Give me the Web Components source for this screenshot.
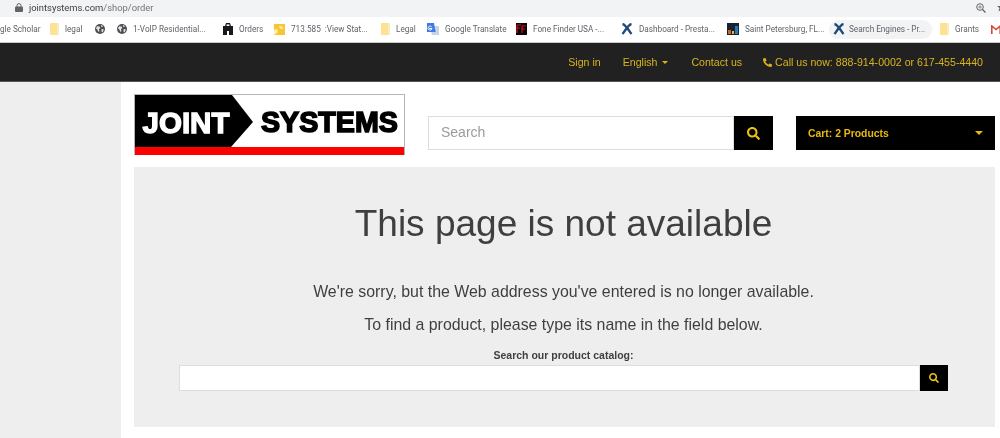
<!DOCTYPE html>
<html>
<head>
<meta charset="utf-8">
<title>Joint Systems</title>
<style>
    html, body { margin: 0; padding: 0; background: #fff; }
    body { width: 1000px; height: 438px; overflow: hidden; font-family: "Liberation Sans", Arial, sans-serif; filter: blur(.35px); }
</style>
</head>
<body>
<browser-bar></browser-bar>
<bookmark-bar>
    <book-mark style="width:37px;margin-left:0">gle Scholar</book-mark>
    <book-mark icon="folder" style="margin-left:13px;width:32px">legal</book-mark>
    <book-mark icon="globe" style="margin-left:13px;width:10px"></book-mark>
    <book-mark icon="globe" style="margin-left:12px;width:87px">1-VoIP Residential...</book-mark>
    <book-mark icon="orders" style="margin-left:19px;width:40px">Orders</book-mark>
    <book-mark icon="star" style="margin-left:11px;width:91px">713.585 &nbsp;:View Stat...</book-mark>
    <book-mark icon="folder" style="margin-left:16px;width:34px">Legal</book-mark>
    <book-mark icon="translate" style="margin-left:12px;width:78px">Google Translate</book-mark>
    <book-mark icon="fone" style="margin-left:11px;width:88px">Fone Finder USA -...</book-mark>
    <book-mark icon="x" style="margin-left:17px;width:93px">Dashboard - Presta...</book-mark>
    <book-mark icon="map" style="margin-left:13px;width:94px">Saint Petersburg, FL...</book-mark>
    <book-mark icon="x" active style="margin-left:8px;width:103px">Search Engines - Pr...</book-mark>
    <book-mark icon="folder" style="margin-left:8px;width:39px">Grants</book-mark>
    <book-mark icon="gmail" style="margin-left:12px;width:9px"></book-mark>
</bookmark-bar>
<top-nav></top-nav>
<page-body>
    <site-header></site-header>
    <not-available></not-available>
</page-body>

<script>
const SEARCH_PATH = 'M505 442.7L405.3 343c-4.5-4.5-10.6-7-17-7H372c27.6-35.3 44-79.7 44-128C416 93.1 322.9 0 208 0S0 93.1 0 208s93.1 208 208 208c48.3 0 92.7-16.4 128-44v16.3c0 6.4 2.5 12.5 7 17l99.7 99.7c9.4 9.4 24.6 9.4 33.9 0l28.3-28.3c9.4-9.4 9.4-24.6.1-34zM208 336c-70.7 0-128-57.2-128-128 0-70.7 57.2-128 128-128 70.7 0 128 57.2 128 128 0 70.7-57.2 128-128 128z';
const PHONE_PATH = 'M493.4 24.6l-104-24c-11.3-2.6-22.9 3.3-27.5 13.9l-48 112c-4.2 9.8-1.4 21.3 6.9 28l60.6 49.6c-36 76.7-98.9 140.5-177.2 177.2l-49.6-60.6c-6.8-8.3-18.2-11.1-28-6.9l-112 48C3.9 366.5-2 378.1.6 389.4l24 104C27.1 504.2 36.7 512 48 512c256.1 0 464-207.5 464-464 0-11.2-7.7-20.9-18.6-23.4z';

const ICONS = {
    folder: '<svg width="9" height="12" viewBox="0 0 9 12"><rect width="9" height="12" rx="1" fill="#fde293"/><rect x="7" width="2" height="12" fill="#f8ebc0"/></svg>',
    globe: '<svg width="10" height="10" viewBox="0 0 10 10"><circle cx="5" cy="5" r="5" fill="#4d4f53"/><path d="M2 2.2l2.4.3.9 1.5-1.4 1.2.6 2-1.2.6L2.4 5.4 1 4.4zM6.2 1l1.7.9-.7 1.2-1.2-.4zM6.7 5l2 .3-.6 2.2-1.2 1-.4-1.6z" fill="#e6e7e8"/></svg>',
    orders: '<svg width="10" height="12" viewBox="0 0 10 12"><path d="M2 3l1-3h4l1 3h2v9H6V8H4v4H0V3z" fill="#17191c"/><rect x="3.6" y="1.4" width="2.8" height="1.6" fill="#fff"/></svg>',
    star: '<svg width="11" height="11" viewBox="0 0 11 11"><rect width="11" height="11" fill="#fbc531"/><path d="M0 11V6l3-1 1 3zM6 1l1 2 2-1-1 2 2 1H7L5 3z" fill="#fdf0b8"/></svg>',
    translate: '<svg width="12" height="12" viewBox="0 0 12 12"><path d="M3 3h9v9H5z" fill="#c9d3e6"/><path d="M0 0h7l1.6 9H0z" fill="#3f7be4"/><path d="M2 5.5h3M4.600 3.800A2 2 0 1 0 5 5.500" stroke="#fff" stroke-width=".9" fill="none"/></svg>',
    fone: '<svg width="11" height="12" viewBox="0 0 11 12"><rect width="11" height="12" fill="#0b0507"/><path d="M1 2h4M1 2v8M1 5h3M6 3h4M6 3v7M6 6h3" stroke="#d3121d" stroke-width="1.200" fill="none"/></svg>',
    x: '<svg width="12" height="12" viewBox="0 0 12 12"><path d="M1.500 1c3 .5 6 6 9 10M10.500 1c-3 .5-6 6-9 10" stroke="#1d4a78" stroke-width="2.400" fill="none"/></svg>',
    map: '<svg width="12" height="12" viewBox="0 0 12 12"><rect width="12" height="12" fill="#182230"/><rect x="1" y="7" width="3" height="4" fill="#d3641f"/><rect x="5" y="8" width="2" height="3" fill="#e8b23a"/><rect x="8" y="3" width="3" height="8" fill="#2b78b8"/></svg>',
    gmail: '<svg width="10" height="9" viewBox="0 0 10 9"><path d="M.8 9V1l4.200 3.500L9.200 1v8" stroke="#d5473a" stroke-width="1.600" fill="none"/></svg>'
};

// address bar on top of the screenshot
class BrowserBar extends HTMLElement {
    constructor() {
        super();
        this.attachShadow({ mode: 'open' });
        this.shadowRoot.innerHTML = `
        <style>
            :host {
                display: flex;
                align-items: center;
                height: 17px;
                background: #f1f3f4;
                font: 9.400px Roboto, sans-serif;
                color: #70757a;
                padding: 0 0 2px 15px;
                box-sizing: border-box;
            }
            svg { display: block; }
            .url { margin-left: 6px; flex: 1; }
            b { font-weight: 400; color: #3c4043; }
            .zoom { margin-right: 11px; }
            .star { margin-right: -6px; }
        </style>
        <svg width="8" height="9" viewBox="0 0 8 9"><path d="M2 4V2.600a2 2 0 0 1 4 0V4" stroke="#5f6368" fill="none"/><rect y="3.500" width="8" height="5.500" rx="1" fill="#5f6368"/></svg>
        <span class="url"><b>jointsystems.com</b>/shop/order</span>
        <svg class="zoom" width="10" height="10" viewBox="0 0 10 10"><circle cx="4" cy="4" r="3.300" stroke="#5f6368" fill="none"/><path d="M6.500 6.500L9.500 9.500" stroke="#5f6368" stroke-width="1.300"/><path d="M2.300 4h3.400M4 2.300v3.400" stroke="#5f6368" stroke-width=".7"/></svg>
        <svg class="star" width="9" height="9" viewBox="0 0 9 9"><path d="M4.500 0l1.300 3H9L6.500 5l1 3.500-3-2-3 2 1-3.500L0 3h3.200z" fill="#5f6368"/></svg>
        `;
    }
}
customElements.define('browser-bar', BrowserBar);

class BookmarkBar extends HTMLElement {
    constructor() {
        super();
        this.attachShadow({ mode: 'open' });
        this.shadowRoot.innerHTML = `
        <style>
            :host {
                display: flex;
                align-items: center;
                height: 25px;
                background: #fff;
                overflow: hidden;
                white-space: nowrap;
                box-sizing: border-box;
                padding-bottom: 1px;
            }
        </style>
        <slot></slot>
        `;
    }
}
customElements.define('bookmark-bar', BookmarkBar);

class BookMark extends HTMLElement {
    constructor() {
        super();
        this.attachShadow({ mode: 'open' });
    }

    connectedCallback() {
        const active = this.hasAttribute('active');
        const icon = ICONS[this.getAttribute('icon')] || '';
        this.shadowRoot.innerHTML = `
        <style>
            :host {
                display: flex;
                flex: none;
                align-items: center;
                gap: 6px;
                height: 19px;
                box-sizing: border-box;
                font: 8.200px Roboto, sans-serif;
                color: #5f6368;
                ${active ? 'background:#f1f3f4;border-radius:10px;padding-left:4px;gap:4px;' : ''}
            }
            svg { display: block; flex: none; }
        </style>
        ${icon}<slot></slot>
        `;
    }
}
customElements.define('book-mark', BookMark);

class TopNav extends HTMLElement {
    constructor() {
        super();
        this.attachShadow({ mode: 'open' });
        this.shadowRoot.innerHTML = `
        <style>
            :host {
                display: flex;
                justify-content: flex-end;
                align-items: center;
                height: 40px;
                background: #212121;
                border-top: 1px solid #c9c9c9;
                border-bottom: 1px solid #555;
                box-sizing: border-box;
                padding-right: 17px;
                color: #d8b420;
                font-size: 10.600px;
            }
            span { display: flex; align-items: center; }
            .lang { margin-left: 22px; }
            .caret {
                width: 0; height: 0;
                margin-left: 5px;
                border: 3px solid transparent;
                border-top: 3.500px solid #d8b420;
                border-bottom: 0;
            }
            .contact { margin-left: 23px; }
            .call { margin-left: 21px; }
            svg { display: block; margin-right: 3px; fill: #d8b420; }
        </style>
        <span>Sign in</span>
        <span class="lang">English<i class="caret"></i></span>
        <span class="contact">Contact us</span>
        <span class="call"><svg width="9" height="9" viewBox="0 0 512 512"><path transform="matrix(-1 0 0 1 512 0)" d="${PHONE_PATH}"/></svg>Call us now: 888-914-0002 or 617-455-4440</span>
        `;
    }
}
customElements.define('top-nav', TopNav);

class PageBody extends HTMLElement {
    constructor() {
        super();
        this.attachShadow({ mode: 'open' });
        this.shadowRoot.innerHTML = `
        <style>
            :host {
                display: grid;
                grid-template-columns: 121px 1fr;
                height: 356px;
                background: #fff;
            }
            .side { background: #eee; }
            .main { padding: 12px 5px 0 13px; }
        </style>
        <div class="side"></div>
        <div class="main"><slot></slot></div>
        `;
    }
}
customElements.define('page-body', PageBody);

class SiteHeader extends HTMLElement {
    constructor() {
        super();
        this.attachShadow({ mode: 'open' });
        this.shadowRoot.innerHTML = `
        <style>
            :host {
                display: flex;
                height: 61px;
                margin-bottom: 12px;
                align-items: flex-start;
            }
            .logo {
                width: 271px;
                height: 61px;
                flex: none;
                box-sizing: border-box;
                border: 1px solid #b5b5b5;
                border-bottom: 0;
                font-family: "Liberation Sans", sans-serif;
                font-weight: 700;
            }
            .logo svg { display: block; }
            .search { display: flex; margin: 22px 0 0 23px; }
            .input {
                width: 306px;
                height: 34px;
                box-sizing: border-box;
                border: 1px solid #ddd;
                padding-left: 12px;
                font-size: 14px;
                line-height: 31px;
                color: #9b9b9b;
                background: #fff;
            }
            .btn {
                width: 39px;
                height: 34px;
                display: flex;
                align-items: center;
                justify-content: center;
                background: #000;
            }
            .cart {
                display: flex;
                align-items: center;
                justify-content: space-between;
                margin: 22px 0 0 23px;
                width: 199px;
                height: 34px;
                box-sizing: border-box;
                padding: 0 12px 0 12px;
                background: #000;
                color: #e8b90f;
                font-size: 10.400px;
                font-weight: 700;
            }
            .cart i {
                width: 0; height: 0;
                border: 4px solid transparent;
                border-top: 4.500px solid #e8b90f;
                border-bottom: 0;
            }
        </style>
        <div class="logo">
            <svg width="269" height="60" viewBox="0 0 269 60">
                <polygon points="0,0 97,0 118,27 96,52 0,52" fill="#000"/>
                <rect y="52" width="269" height="8" fill="#f00"/>
                <text x="7.500" y="37.500" font-size="29" fill="#fff" stroke="#fff" stroke-width="1.300" textLength="87" lengthAdjust="spacingAndGlyphs">JOINT</text>
                <text x="126" y="36.500" font-size="30" fill="#000" stroke="#000" stroke-width="1.600" textLength="137" lengthAdjust="spacingAndGlyphs">SYSTEMS</text>
            </svg>
        </div>
        <div class="search">
            <div class="input">Search</div>
            <div class="btn"><svg width="13" height="13" viewBox="0 0 512 512" fill="#eec10f"><path d="${SEARCH_PATH}"/></svg></div>
        </div>
        <div class="cart"><span>Cart: 2 Products</span><i></i></div>
        `;
    }
}
customElements.define('site-header', SiteHeader);

class NotAvailable extends HTMLElement {
    constructor() {
        super();
        this.attachShadow({ mode: 'open' });
        this.shadowRoot.innerHTML = `
        <style>
            :host {
                display: block;
                height: 260px;
                background: #eee;
                box-sizing: border-box;
                padding: 36px 2px 0 0;
                text-align: center;
                color: #3f3f3f;
            }
            h1 { margin: 0; font-size: 37px; font-weight: 400; line-height: 42px; }
            p { margin: 0; font-size: 15.900px; line-height: 18px; }
            .sorry { margin-top: 38px; }
            .find { margin-top: 15px; }
            label { display: block; margin-top: 15px; font-size: 10.500px; font-weight: 700; line-height: 12px; }
            .row { display: flex; margin: 4px 45px 0 45px; }
            .field { flex: 1; height: 26px; box-sizing: border-box; background: #fff; border: 1px solid #ddd; }
            .btn { width: 28px; height: 26px; flex: none; display: flex; align-items: center; justify-content: center; background: #000; }
        </style>
        <h1>This page is not available</h1>
        <p class="sorry">We're sorry, but the Web address you've entered is no longer available.</p>
        <p class="find">To find a product, please type its name in the field below.</p>
        <label>Search our product catalog:</label>
        <div class="row">
            <div class="field"></div>
            <div class="btn"><svg width="10" height="10" viewBox="0 0 512 512" fill="#eec10f"><path d="${SEARCH_PATH}"/></svg></div>
        </div>
        `;
    }
}
customElements.define('not-available', NotAvailable);
</script>
</body>
</html>
